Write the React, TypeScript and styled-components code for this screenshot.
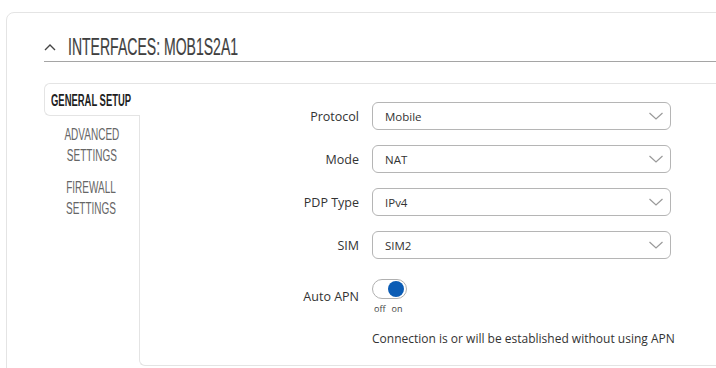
import React from "react";
import styled, { createGlobalStyle } from "styled-components";

const Global = createGlobalStyle`
  html, body { margin: 0; padding: 0; background: #ffffff; overflow: hidden; }
  body { width: 716px; height: 368px; font-family: "Open Sans", "Noto Sans", sans-serif; color: #333; }
`;

const Card = styled.section`
  margin: 12px 0 0 6px;
  width: 760px;
  border: 1px solid #e4e4e4;
  border-radius: 8px;
  padding: 0 0 0 37px;
  height: 400px;
  box-sizing: border-box;
`;

const Header = styled.div`
  display: flex;
  align-items: center;
  gap: 12px;
  padding-top: 20px;
  height: 28px;
  border-bottom: 1px solid #a5a5a5;
  box-sizing: content-box;
  overflow: hidden;
`;

const Title = styled.h2`
  margin: 0;
  font-family: "Liberation Sans", Arial, sans-serif;
  font-weight: 400;
  font-size: 24px;
  line-height: 28px;
  color: #3f3f3f;
  white-space: nowrap;
  transform: scaleX(0.585);
  transform-origin: left center;
  -webkit-text-stroke: 0.2px #3f3f3f;
`;

const Tabs = styled.div`
  display: flex;
  margin-top: 21px;
`;

const TabList = styled.div`
  width: 95px;
  flex: none;
  display: flex;
  flex-direction: column;
  position: relative;
  z-index: 1;
`;

const Tab = styled.div<{ $active?: boolean }>`
  display: flex;
  justify-content: ${(p) => (p.$active ? "flex-start" : "center")};
  ${(p) =>
    p.$active
      ? `
    height: 33px;
    box-sizing: border-box;
    padding: 6px 0 0 6px;
    border: 1px solid #e4e4e4;
    border-right: none;
    border-radius: 6px 0 0 6px;
    background: #fff;
    margin-right: -1px;
  `
      : `
    padding: 8px 0 3px;
  `}
`;

const TabText = styled.span<{ $active?: boolean }>`
  font-family: "Liberation Sans", Arial, sans-serif;
  font-size: 16px;
  line-height: 21px;
  white-space: pre-line;
  text-align: center;
  color: ${(p) => (p.$active ? "#1e1e1e" : "#666")};
  font-weight: ${(p) => (p.$active ? 700 : 400)};
  transform: scaleX(${(p) => (p.$active ? 0.59 : 0.625)});
  transform-origin: ${(p) => (p.$active ? "left" : "center")} center;
  flex: none;
`;

const Panel = styled.div`
  flex: 1;
  border-top: 1px solid #e4e4e4;
  border-left: 1px solid #e4e4e4;
  border-bottom: 1px solid #e4e4e4;
  border-bottom-left-radius: 6px;
  height: 283px;
  box-sizing: border-box;
  padding-top: 18px;
`;

const Row = styled.div<{ $gapTop?: number }>`
  display: grid;
  grid-template-columns: 219px 299px;
  column-gap: 13px;
  align-items: center;
  margin-bottom: 15px;
  margin-top: ${(p) => p.$gapTop ?? 0}px;
`;

const Label = styled.label<{ $top?: boolean }>`
  text-align: right;
  font-size: 12.5px;
  color: #333;
  align-self: ${(p) => (p.$top ? "start" : "center")};
  padding-top: ${(p) => (p.$top ? "9px" : "0")};
`;

const Select = styled.div`
  height: 28px;
  box-sizing: border-box;
  border: 1px solid #b5b5b5;
  border-radius: 6px;
  display: flex;
  align-items: center;
  justify-content: space-between;
  padding: 0 6px 0 12px;
  font-size: 11.5px;
  color: #333;
`;

const ToggleBox = styled.div`
  display: flex;
  flex-direction: column;
  align-items: flex-start;
  gap: 4px;
`;

const Track = styled.div`
  width: 35px;
  height: 20px;
  box-sizing: border-box;
  border: 1px solid #b0b0b0;
  border-radius: 10px;
  display: flex;
  align-items: center;
  justify-content: flex-end;
  padding-right: 2px;
`;

const Knob = styled.span`
  width: 16px;
  height: 16px;
  border-radius: 50%;
  background: #0b5cb5;
`;

const OffOn = styled.div`
  font-size: 9px;
  line-height: 12px;
  color: #444;
  display: flex;
  gap: 6px;
  padding-left: 2px;
`;

const Hint = styled.div`
  margin-left: 232px;
  font-size: 12px;
  color: #333;
  margin-top: 14px;
`;

const Chevron = () => (
  <svg width="16" height="10" viewBox="0 0 16 10" fill="none">
    <path d="M1.5 2 L8 8 L14.5 2" stroke="#9a9a9a" strokeWidth="1.2" />
  </svg>
);

const fields = [
  ["Protocol", "Mobile"],
  ["Mode", "NAT"],
  ["PDP Type", "IPv4"],
  ["SIM", "SIM2"],
];

export default function App() {
  return (
    <>
      <Global />
      <Card>
        <Header>
          <svg width="12" height="8" viewBox="0 0 12 8" fill="none">
            <path d="M1 7 L6 2 L11 7" stroke="#444" strokeWidth="1.4" />
          </svg>
          <Title>INTERFACES: MOB1S2A1</Title>
        </Header>
        <Tabs>
          <TabList>
            <Tab $active>
              <TabText $active>GENERAL SETUP</TabText>
            </Tab>
            <Tab>
              <TabText>{"ADVANCED\nSETTINGS"}</TabText>
            </Tab>
            <Tab>
              <TabText>{"FIREWALL\nSETTINGS"}</TabText>
            </Tab>
          </TabList>
          <Panel>
            {fields.map(([l, v]) => (
              <Row key={l}>
                <Label>{l}</Label>
                <Select>
                  <span>{v}</span>
                  <Chevron />
                </Select>
              </Row>
            ))}
            <Row $gapTop={20}>
              <Label $top>Auto APN</Label>
              <ToggleBox>
                <Track>
                  <Knob />
                </Track>
                <OffOn>
                  <span>off</span>
                  <span>on</span>
                </OffOn>
              </ToggleBox>
            </Row>
            <Hint>Connection is or will be established without using APN</Hint>
          </Panel>
        </Tabs>
      </Card>
    </>
  );
}
